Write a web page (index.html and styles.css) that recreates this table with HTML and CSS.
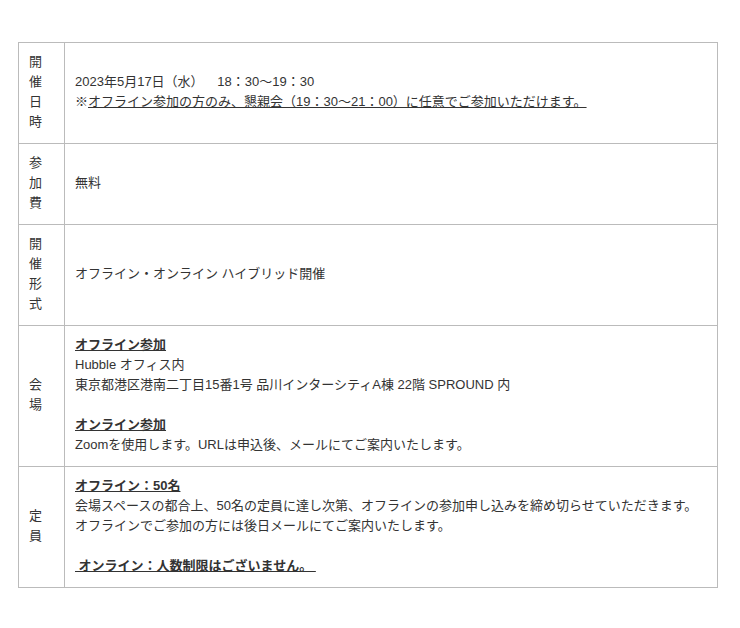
FILE: index.html
```html
<!DOCTYPE html>
<html lang="ja">
<head>
  <meta charset="UTF-8" />
  <title>イベント概要</title>
  <link rel="stylesheet" href="styles.css">
</head>
<body>
  <div class="outline">
    <table class="info-table">
      <tr>
        <th>開催日時</th>
        <td>2023年5月17日（水）　&nbsp;&nbsp;18：30〜19：30<br>※<u>オフライン参加の方のみ、懇親会（19：30〜21：00）に任意でご参加いただけます。</u></td>
      </tr>
      <tr>
        <th>参加費</th>
        <td>無料</td>
      </tr>
      <tr>
        <th>開催形式</th>
        <td>オフライン・オンライン ハイブリッド開催</td>
      </tr>
      <tr>
        <th>会場</th>
        <td>
          <strong><u>オフライン参加</u></strong><br>
          Hubble オフィス内<br>
          東京都港区港南二丁目15番1号 品川インターシティA棟 22階 SPROUND 内<br>
          <br>
          <strong><u>オンライン参加</u></strong><br>
          Zoomを使用します。URLは申込後、メールにてご案内いたします。
        </td>
      </tr>
      <tr>
        <th>定員</th>
        <td>
          <strong><u>オフライン：50名</u></strong><br>
          会場スペースの都合上、50名の定員に達し次第、オフラインの参加申し込みを締め切らせていただきます。<br>
          オフラインでご参加の方には後日メールにてご案内いたします。<br>
          <br>
          <strong><u>&nbsp;オンライン：人数制限はございません。&nbsp;</u></strong>
        </td>
      </tr>
    </table>
  </div>
</body>
</html>
```

FILE: styles.css
```css
* {
  margin: 0;
  padding: 0;
  box-sizing: border-box;
}
body {
  background: #fff;
  color: #333;
  font-family: "Liberation Sans", Arial, "Noto Sans CJK JP", sans-serif;
  font-size: 13px;
  line-height: 20px;
}
.outline {
  padding: 42px 22px 0 18px;
}
/* Info table */
.info-table {
  width: 700px;
  border-collapse: collapse;
}
.info-table th,
.info-table td {
  border: 1px solid #bbb;
  padding: 9px 10px 11px;
  vertical-align: middle;
  text-align: left;
  font-weight: normal;
}
.info-table th {
  width: 46px;
  word-break: break-all;
}
.info-table strong {
  font-weight: bold;
}
```
